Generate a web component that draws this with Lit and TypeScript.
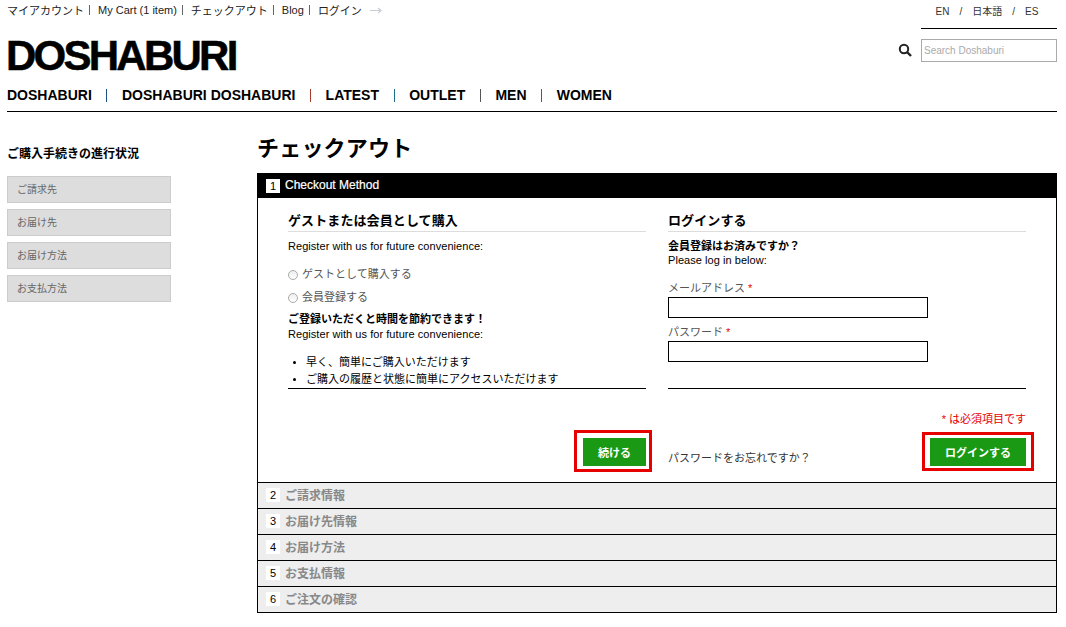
import { LitElement, html, css } from "lit";
import { customElement } from "lit/decorators.js";

const top = ["マイアカウント", "My Cart (1 item)", "チェックアウト", "Blog", "ログイン"];
const nav: [string, string][] = [
  ["DOSHABURI", "#1d4f8c"],
  ["DOSHABURI DOSHABURI", "#a33a2a"],
  ["LATEST", "#1d6f8c"],
  ["OUTLET", "#555"],
  ["MEN", "#1d6f8c"],
  ["WOMEN", ""],
];
const progress = ["ご請求先", "お届け先", "お届け方法", "お支払方法"];
const steps = ["ご請求情報", "お届け先情報", "お届け方法", "お支払情報", "ご注文の確認"];

@customElement("app-root")
export class AppRoot extends LitElement {
  static styles = css`
    :host {
      display: block;
      width: 1066px;
      height: 627px;
      overflow: hidden;
      background: #fff;
      color: #000;
      font-family: "Liberation Sans", "Noto Sans CJK JP", sans-serif;
      font-size: 11px;
      box-sizing: border-box;
      padding: 0 9px 0 7px;
    }
    * { box-sizing: border-box; }
    header { display: grid; grid-template-columns: 1fr 136px; border-bottom: 1px solid #000; height: 112px; }
    .left-head { display: flex; flex-direction: column; }
    .toplinks { display: flex; align-items: center; height: 20px; font-size: 11px; color: #222; }
    .toplinks .sep { width: 1px; height: 10px; background: #666; margin: 0 8px 0 5px; }
    .toplinks svg { margin-left: 8px; }
    .logo { font-size: 42px; line-height: 34px; height: 34px; margin-top: 19px; font-weight: 700; letter-spacing: -2.75px; margin-left: -1px; -webkit-text-stroke: 0.5px #000; }
    nav { display: flex; align-items: center; margin-top: 13px; font-size: 14px; font-weight: 700; height: 18px; }
    nav .bar { width: 1px; height: 13px; margin: 0 14.6px; }
    .right-head { position: relative; }
    .lang { height: 29px; border-bottom: 1px solid #000; display: flex; justify-content: center; gap: 10px; padding: 5px 4px 0 0; font-size: 10px; color: #333; line-height: 13px; }
    .search { margin-top: 10px; height: 23px; border: 1px solid #aaa; display: flex; align-items: center; padding-left: 2px; font-size: 10px; color: #aaa; }
    .glass { position: absolute; left: -23px; top: 43px; }
    .content { display: grid; grid-template-columns: 164px 800px; column-gap: 86px; }
    aside h3 { margin: 35px 0 15px; font-size: 12px; line-height: 14px; font-weight: 700; }
    aside .item { height: 27px; margin-bottom: 6px; border: 1px solid #ccc; background: #ddd; padding-left: 9px; line-height: 25px; font-size: 10px; color: #666; }
    h1 { margin: 23px 0 11px; font-size: 22px; line-height: 27px; font-weight: 700; letter-spacing: 0.2px; height: 27px; }
    .active-h { height: 25px; background: #000; color: #fff; display: flex; align-items: center; padding: 0 0 2px 9px; font-size: 12px; font-weight: 400; -webkit-text-stroke: 0.2px #fff; }
    .num { width: 14px; height: 14px; background: #fff; color: #000; display: flex; align-items: center; justify-content: center; font-size: 11px; margin: 2px 5px 0 0; -webkit-text-stroke: 0; }
    .panel { height: 284px; border: 1px solid #000; border-width: 0 1px; padding: 0 30px; display: grid; grid-template-columns: 358px 358px; column-gap: 22px; }
    .col { display: flex; flex-direction: column; position: relative; height: 100%; }
    h2 { margin: 14px 0 0; font-size: 13px; line-height: 17px; height: 20px; font-weight: 700; border-bottom: 1px solid #ddd; letter-spacing: 0.1px; }
    .txt { line-height: 14px; font-size: 11px; }
    .latin { letter-spacing: 0.05px; }
    .strong { font-weight: 700; }
    .reg { margin-top: 7px; }
    .radio { display: flex; align-items: center; height: 16px; color: #555; gap: 4px; }
    .radio i { width: 10px; height: 10px; border: 1px solid #aaa; border-radius: 50%; margin-top: 2px; background: linear-gradient(#eee, #fff); }
    .radios { display: flex; flex-direction: column; gap: 7px; margin-top: 13px; }
    .gain { margin-top: 7px; }
    .gain + .txt { margin-top: 1px; }
    ul { list-style: none; margin: 0; padding: 11px 0 0 0; border-bottom: 1px solid #000; height: 48px; }
    li { display: flex; align-items: center; height: 17px; padding-left: 18px; position: relative; }
    li::before { content: ""; position: absolute; left: 5px; top: 9px; width: 3px; height: 3px; border-radius: 50%; background: #000; }
    .actions { position: absolute; right: -6px; top: 232px; }
    .frame { border: 3px solid #e60000; display: block; padding: 5px 3px 3px 6px; }
    .btn { background: #1a9a14; color: #fff; font-weight: 700; font-size: 11px; display: flex; align-items: center; justify-content: center; height: 28px; width: 63px; }
    .btn.wide { width: 96px; }
    label { display: block; color: #555; line-height: 14px; height: 14px; }
    label b { color: #e60000; font-weight: 400; }
    .field { height: 21px; width: 260px; border: 1px solid #000; margin-top: 2px; }
    .pad1 { margin-top: 14px; }
    .pad2 { margin-top: 7px; }
    .rule { border-top: 1px solid #000; margin-top: 26px; }
    .req { position: absolute; right: 0; top: 214px; color: #e60000; line-height: 14px; }
    .forgot { position: absolute; left: 0; top: 253px; line-height: 14px; color: #333; }
    .login-actions { position: absolute; right: -8px; top: 234px; }
    .login-actions .frame { padding: 3px 5px 2px 5px; }
    .step { height: 27px; border: 1px solid #000; background: #eee; display: flex; align-items: center; padding: 0 0 2px 8px; font-size: 12px; font-weight: 700; color: #888; }
    .step + .step { border-top: 0; height: 26px; }
    .step .n { width: 14px; height: 14px; background: #fff; color: #000; font-size: 11px; font-weight: 400; display: flex; align-items: center; justify-content: center; margin-right: 5px; }
  `;

  render() {
    return html`
      <header>
        <div class="left-head">
          <div class="toplinks">
            ${top.map((t, i) => html`<span>${t}</span>${i < top.length - 1 ? html`<span class="sep"></span>` : ""}`)}
            <svg width="12" height="7" viewBox="0 0 12 7"><path d="M0 3.5h10M8 1l3 2.5L8 6" fill="none" stroke="#c5ccd6" stroke-width="1.2"/></svg>
          </div>
          <div class="logo">DOSHABURI</div>
          <nav>
            ${nav.map(([t, c]) => html`<span>${t}</span>${c ? html`<span class="bar" style="background:${c}"></span>` : ""}`)}
          </nav>
        </div>
        <div class="right-head">
          <div class="lang"><span>EN</span><span>/</span><span>日本語</span><span>/</span><span>ES</span></div>
          <svg class="glass" width="14" height="14" viewBox="0 0 14 14"><circle cx="6" cy="6" r="4.2" fill="none" stroke="#222" stroke-width="2"/><path d="M9 9l4 4" stroke="#222" stroke-width="2.4"/></svg>
          <div class="search">Search Doshaburi</div>
        </div>
      </header>
      <div class="content">
        <aside>
          <h3>ご購入手続きの進行状況</h3>
          ${progress.map((p) => html`<div class="item">${p}</div>`)}
        </aside>
        <main>
          <h1>チェックアウト</h1>
          <div class="active-h"><span class="num">1</span>Checkout Method</div>
          <div class="panel">
            <div class="col">
              <h2>ゲストまたは会員として購入</h2>
              <div class="txt latin reg">Register with us for future convenience:</div>
              <div class="radios">
                <div class="radio txt"><i></i>ゲストとして購入する</div>
                <div class="radio txt"><i></i>会員登録する</div>
              </div>
              <div class="txt strong gain">ご登録いただくと時間を節約できます！</div>
              <div class="txt latin">Register with us for future convenience:</div>
              <ul>
                <li>早く、簡単にご購入いただけます</li>
                <li>ご購入の履歴と状態に簡単にアクセスいただけます</li>
              </ul>
              <div class="actions"><span class="frame"><span class="btn">続ける</span></span></div>
            </div>
            <div class="col">
              <h2>ログインする</h2>
              <div class="txt strong reg">会員登録はお済みですか？</div>
              <div class="txt latin">Please log in below:</div>
              <label class="pad1">メールアドレス <b>*</b></label>
              <div class="field"></div>
              <label class="pad2">パスワード <b>*</b></label>
              <div class="field"></div>
              <div class="rule"></div>
              <div class="req">* は必須項目です</div>
              <div class="forgot">パスワードをお忘れですか？</div>
              <div class="login-actions"><span class="frame"><span class="btn wide">ログインする</span></span></div>
            </div>
          </div>
          ${steps.map((s, i) => html`<div class="step"><span class="n">${i + 2}</span>${s}</div>`)}
        </main>
      </div>
    `;
  }
}
